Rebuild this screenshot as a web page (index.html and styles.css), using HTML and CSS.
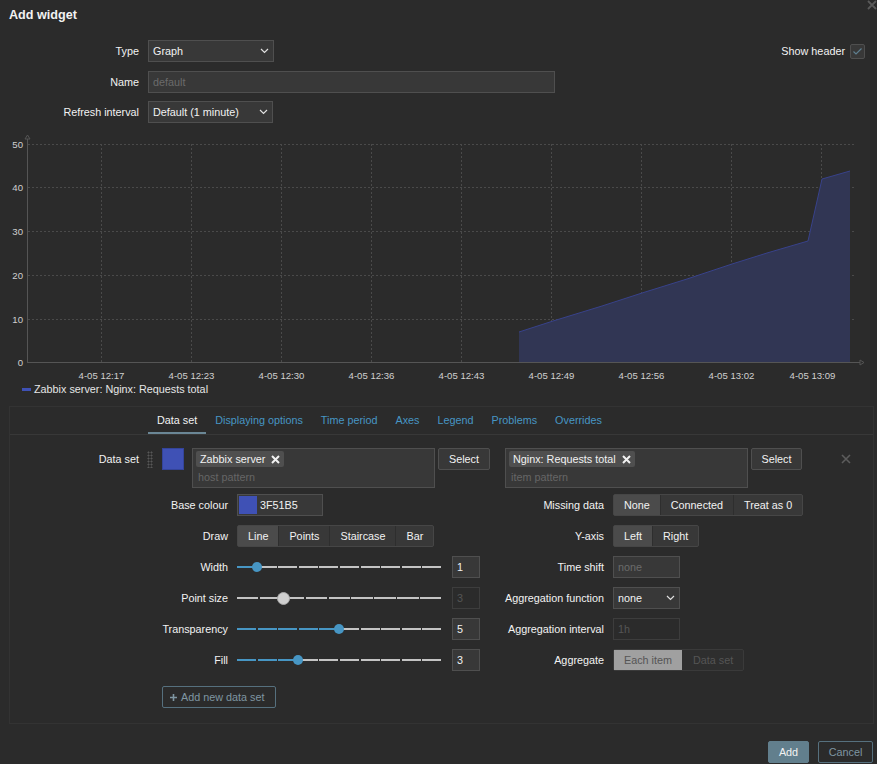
FILE: index.html
```html
<!DOCTYPE html>
<html lang="en">
<head>
<meta charset="utf-8">
<title>Add widget</title>
<link rel="stylesheet" href="styles.css">
</head>
<body>
<div class="dialog">
  <div class="head">
    <h1 class="title">Add widget</h1>
    <svg class="close" width="10" height="10" viewBox="0 0 10 10"><path d="M1 1L9 9M9 1L1 9" stroke="#5a5a5a" stroke-width="1.8"/></svg>
  </div>

  <div class="top-form">
    <div class="frow">
      <label class="flabel">Type</label>
      <div class="select w-type"><span>Graph</span><svg class="chev" width="9" height="6" viewBox="0 0 9 6"><path d="M1 1L4.5 4.5L8 1" fill="none" stroke="#e0e0e0" stroke-width="1.2"/></svg></div>
      <div class="show-header"><span>Show header</span><span class="checkbox"><svg width="11" height="9" viewBox="0 0 11 9"><path d="M1.5 4.5L4 7L9.5 1.5" fill="none" stroke="#5e7f90" stroke-width="1.2"/></svg></span></div>
    </div>
    <div class="frow">
      <label class="flabel">Name</label>
      <div class="input w-name ph">default</div>
    </div>
    <div class="frow">
      <label class="flabel">Refresh interval</label>
      <div class="select w-refresh"><span>Default (1 minute)</span><svg class="chev" width="9" height="6" viewBox="0 0 9 6"><path d="M1 1L4.5 4.5L8 1" fill="none" stroke="#e0e0e0" stroke-width="1.2"/></svg></div>
    </div>
  </div>

  <svg class="chart" width="877" height="270" viewBox="0 0 877 270">
    <g stroke="#4a4a4a" stroke-width="1" stroke-dasharray="2,2">
      <line x1="28" y1="14.5" x2="856" y2="14.5"/>
      <line x1="28" y1="57.5" x2="856" y2="57.5"/>
      <line x1="28" y1="101.5" x2="856" y2="101.5"/>
      <line x1="28" y1="145.5" x2="856" y2="145.5"/>
      <line x1="28" y1="189.5" x2="856" y2="189.5"/>
      <line x1="101.5" y1="14" x2="101.5" y2="232"/>
      <line x1="191.5" y1="14" x2="191.5" y2="232"/>
      <line x1="281.5" y1="14" x2="281.5" y2="232"/>
      <line x1="371.5" y1="14" x2="371.5" y2="232"/>
      <line x1="461.5" y1="14" x2="461.5" y2="232"/>
      <line x1="551.5" y1="14" x2="551.5" y2="232"/>
      <line x1="641.5" y1="14" x2="641.5" y2="232"/>
      <line x1="731.5" y1="14" x2="731.5" y2="232"/>
      <line x1="821.5" y1="14" x2="821.5" y2="232"/>
    </g>
    <polygon points="519,202 553,191 602,176 642,163 687,149 732,134 767,123 808,111 822,49 850,41 850,232 519,232" fill="#313654"/>
    <polyline points="519,202 553,191 602,176 642,163 687,149 732,134 767,123 808,111 822,49 850,41" fill="none" stroke="#38428a" stroke-width="1"/>
    <g stroke="#555" stroke-width="1" fill="none">
      <line x1="27.5" y1="9" x2="27.5" y2="232.5"/>
      <line x1="27" y1="232.5" x2="860" y2="232.5"/>
      <path d="M25 9L27.5 5L30 9Z"/>
      <path d="M860 230L864 232.5L860 235Z"/>
    </g>
    <g class="ylab" fill="#d0d0d0" text-anchor="end">
      <text x="23" y="17.5">50</text>
      <text x="23" y="60.5">40</text>
      <text x="23" y="104.5">30</text>
      <text x="23" y="148.5">20</text>
      <text x="23" y="192.5">10</text>
      <text x="23" y="235.5">0</text>
    </g>
    <g class="xlab" fill="#d0d0d0" text-anchor="middle">
      <text x="101.5" y="248.5">4-05 12:17</text>
      <text x="191.5" y="248.5">4-05 12:23</text>
      <text x="281.5" y="248.5">4-05 12:30</text>
      <text x="371.5" y="248.5">4-05 12:36</text>
      <text x="461.5" y="248.5">4-05 12:43</text>
      <text x="551.5" y="248.5">4-05 12:49</text>
      <text x="641.5" y="248.5">4-05 12:56</text>
      <text x="731.5" y="248.5">4-05 13:02</text>
      <text x="812.5" y="248.5">4-05 13:09</text>
    </g>
    <rect x="22" y="258" width="9" height="3" fill="#3f51b5"/>
    <text class="legend" x="34" y="263" fill="#e6e6e6">Zabbix server: Nginx: Requests total</text>
  </svg>

  <div class="tabs-box">
    <div class="tabs">
      <span class="tab active">Data set</span>
      <span class="tab">Displaying options</span>
      <span class="tab">Time period</span>
      <span class="tab">Axes</span>
      <span class="tab">Legend</span>
      <span class="tab">Problems</span>
      <span class="tab">Overrides</span>
    </div>
    <div class="panel">
      <div class="ds-row">
        <label class="ds-label">Data set</label>
        <span class="handle"></span>
        <span class="swatch"></span>
        <div class="ms">
          <span class="chip">Zabbix server <svg width="9" height="9" viewBox="0 0 9 9"><path d="M1 1L8 8M8 1L1 8" stroke="#f2f2f2" stroke-width="2"/></svg></span>
          <div class="ms-ph">host pattern</div>
        </div>
        <button class="btn sel1">Select</button>
        <div class="ms ms-item">
          <span class="chip">Nginx: Requests total <svg width="9" height="9" viewBox="0 0 9 9"><path d="M1 1L8 8M8 1L1 8" stroke="#f2f2f2" stroke-width="2"/></svg></span>
          <div class="ms-ph">item pattern</div>
        </div>
        <button class="btn sel2">Select</button>
        <svg class="ds-remove" width="10" height="10" viewBox="0 0 10 10"><path d="M1 1L9 9M9 1L1 9" stroke="#5c5c5c" stroke-width="1.6"/></svg>
      </div>

      <div class="cols">
        <div class="col col-left">
          <div class="crow">
            <label class="clabel">Base colour</label>
            <div class="input colour"><span class="mini-swatch"></span><span>3F51B5</span></div>
          </div>
          <div class="crow">
            <label class="clabel">Draw</label>
            <div class="seg"><span class="on">Line</span><span>Points</span><span>Staircase</span><span>Bar</span></div>
          </div>
          <div class="crow">
            <label class="clabel">Width</label>
            <div class="slider" style="--p:9.7%"><div class="track"></div><span class="thumb"></span></div>
            <div class="input num">1</div>
          </div>
          <div class="crow">
            <label class="clabel">Point size</label>
            <div class="slider off" style="--p:22.3%"><div class="track"></div><span class="thumb"></span></div>
            <div class="input num dis">3</div>
          </div>
          <div class="crow">
            <label class="clabel">Transparency</label>
            <div class="slider" style="--p:49.5%"><div class="track"></div><span class="thumb"></span></div>
            <div class="input num">5</div>
          </div>
          <div class="crow">
            <label class="clabel">Fill</label>
            <div class="slider" style="--p:29.6%"><div class="track"></div><span class="thumb"></span></div>
            <div class="input num">3</div>
          </div>
        </div>
        <div class="col col-right">
          <div class="crow">
            <label class="clabel">Missing data</label>
            <div class="seg"><span class="on">None</span><span>Connected</span><span>Treat as 0</span></div>
          </div>
          <div class="crow">
            <label class="clabel">Y-axis</label>
            <div class="seg"><span class="on">Left</span><span>Right</span></div>
          </div>
          <div class="crow">
            <label class="clabel">Time shift</label>
            <div class="input small ph">none</div>
          </div>
          <div class="crow">
            <label class="clabel">Aggregation function</label>
            <div class="select small"><span>none</span><svg class="chev" width="9" height="6" viewBox="0 0 9 6"><path d="M1 1L4.5 4.5L8 1" fill="none" stroke="#e0e0e0" stroke-width="1.2"/></svg></div>
          </div>
          <div class="crow">
            <label class="clabel">Aggregation interval</label>
            <div class="input small dis">1h</div>
          </div>
          <div class="crow">
            <label class="clabel">Aggregate</label>
            <div class="seg seg-dis"><span class="on">Each item</span><span>Data set</span></div>
          </div>
        </div>
      </div>

      <button class="add-ds"><svg width="7" height="7" viewBox="0 0 7 7"><path d="M3.5 0V7M0 3.5H7" stroke="#7f96a2" stroke-width="1.6"/></svg> Add new data set</button>
    </div>
  </div>

  <div class="footer">
    <button class="btn-add">Add</button>
    <button class="btn-cancel">Cancel</button>
  </div>
</div>
</body>
</html>
```

FILE: styles.css
```css
* { box-sizing: border-box; }
html, body { margin: 0; padding: 0; background: #2b2b2b; }
body {
  font-family: "Liberation Sans", Arial, sans-serif;
  font-size: 10.8px;
  color: #f2f2f2;
  width: 877px;
  height: 764px;
  overflow: hidden;
}
.dialog { position: relative; width: 877px; height: 764px; }

.head { height: 40px; padding: 7px 0 0 9px; }
.title { margin: 0; font-size: 12.6px; font-weight: bold; line-height: 16px; color: #f2f2f2; }
.close { position: absolute; top: 0; right: 0; }

.top-form { display: flex; flex-direction: column; gap: 8.5px; }
.frow { display: flex; align-items: center; height: 22px; }
.flabel { width: 139px; text-align: right; margin-right: 9px; color: #f2f2f2; }

.select, .input {
  height: 22px;
  background: #383838;
  border: 1px solid #4f4f4f;
  display: flex;
  align-items: center;
  padding: 0 4px;
  color: #f2f2f2;
}
.select { justify-content: space-between; padding-right: 4px; }
.chev { flex: none; }
.w-type { width: 126px; }
.w-name { width: 407px; }
.w-refresh { width: 125px; }
.ph { color: #6b6b6b; }

.show-header { margin-left: auto; margin-right: 12px; display: flex; align-items: center; gap: 5px; }
.checkbox {
  width: 15px; height: 15px;
  border: 1px solid #4f4f4f;
  background: #383838;
  border-radius: 2px;
  display: flex; align-items: center; justify-content: center;
}

.chart { display: block; margin-top: 7px; }
.ylab, .xlab { font-size: 9.6px; font-family: "Liberation Sans", Arial, sans-serif; }
.legend { font-size: 10.8px; font-family: "Liberation Sans", Arial, sans-serif; }

.tabs-box {
  margin: 6px 0 0 9px;
  width: 865px;
  border: 1px solid #333333;
}
.tabs {
  display: flex;
  height: 28px;
  padding-left: 138px;
  border-bottom: 1px solid #383838;
}
.tab {
  padding: 0 9px;
  line-height: 26px;
  color: #4796c4;
  border-bottom: 2px solid transparent;
}
.tab.active { color: #f2f2f2; border-bottom-color: #6b8796; }

.panel { height: 288px; padding-top: 13px; }

.ds-row { display: flex; align-items: flex-start; height: 40px; }
.ds-label { width: 129px; text-align: right; line-height: 22px; }
.handle {
  width: 6px; height: 17px;
  margin: 3px 0 0 8px;
  background-image: radial-gradient(circle, #575757 0.9px, transparent 1.1px);
  background-size: 3px 3px;
}
.swatch {
  width: 22px; height: 22px;
  margin-left: 9px;
  background: #3f51b5;
  border: 1px solid #34449a;
}
.ms {
  width: 243px; height: 40px;
  margin-left: 8px;
  background: #383838;
  border: 1px solid #4f4f4f;
  padding: 2px 3px;
}
.ms-item { margin-left: 15px; }
.chip {
  display: inline-flex; align-items: center; gap: 6px;
  height: 16px;
  padding: 0 4px;
  background: #4f4f4f;
  border-radius: 2px;
  color: #f2f2f2;
}
.ms-ph { color: #666; padding: 4px 0 0 2px; line-height: 13px; }
.btn {
  height: 22px;
  margin-left: 3px;
  background: #383838;
  border: 1px solid #4f4f4f;
  border-radius: 2px;
  color: #f2f2f2;
  font: inherit;
  padding: 0;
}
.sel1 { width: 52px; }
.sel2 { width: 51px; }
.ds-remove { margin: 6px 0 0 39px; }

.cols { display: flex; margin-top: 6px; }
.col { display: flex; flex-direction: column; gap: 9px; }
.col-left { width: 480px; }
.col-left .clabel { width: 218px; }
.col-right .clabel { width: 114px; }
.crow { display: flex; align-items: center; height: 22px; }
.clabel { text-align: right; margin-right: 9px; color: #f2f2f2; }

.colour { width: 86px; padding: 0 2px 0 1px; gap: 3px; }
.mini-swatch { width: 18px; height: 18px; background: #3f51b5; }

.seg {
  display: inline-flex;
  height: 22px;
  border: 1px solid #464646;
  border-radius: 2px;
  background: #383838;
}
.seg span {
  padding: 0 10px;
  line-height: 20px;
  border-left: 1px solid #2e2e2e;
}
.seg span:first-child { border-left: 0; }
.seg span.on { background: #4b4b4b; }
.seg-dis { background: #2e2e2e; border-color: #3a3a3a; }
.seg-dis span { color: #555; }
.seg-dis span.on { background: #a0a0a0; color: #555; }

.slider { position: relative; width: 206px; height: 22px; display: flex; align-items: center; }
.track {
  width: 100%; height: 2px;
  background:
    repeating-linear-gradient(to right, transparent 0 19px, #2b2b2b 19px 20.6px),
    linear-gradient(to right, #4796c4 var(--p), #c4c4c4 var(--p));
}
.slider.off .track {
  background:
    repeating-linear-gradient(to right, transparent 0 21.3px, #2b2b2b 21.3px 22.9px),
    #c4c4c4;
}
.thumb {
  position: absolute;
  left: var(--p);
  top: 50%;
  width: 10px; height: 10px;
  margin: -5px 0 0 -5px;
  border-radius: 50%;
  background: #4796c4;
}
.slider.off .thumb {
  width: 13px; height: 13px;
  margin: -6.5px 0 0 -6px;
  background: #cfcfcf;
  border: 1px solid #a8a8a8;
}
.num { width: 28px; margin-left: 9px; }
.dis { background: #2b2b2b; border-color: #3d3d3d; color: #555; }
.small { width: 67px; }

.add-ds {
  display: flex; align-items: center; gap: 4px;
  margin: 15px 0 0 152px;
  width: 114px; height: 22px;
  background: transparent;
  border: 1px solid #56707e;
  border-radius: 2px;
  color: #7f96a2;
  font: inherit;
  padding: 0 0 0 7px;
}

.footer { display: flex; justify-content: flex-end; gap: 9px; margin-top: 17px; padding-right: 4px; }
.btn-add, .btn-cancel {
  height: 22px;
  font: inherit;
  border-radius: 2px;
  padding: 0;
}
.btn-add { background: #627f8d; border: 1px solid #627f8d; color: #f2f2f2; width: 41px; }
.btn-cancel { background: transparent; border: 1px solid #56707e; color: #7f96a2; width: 55px; }
```
